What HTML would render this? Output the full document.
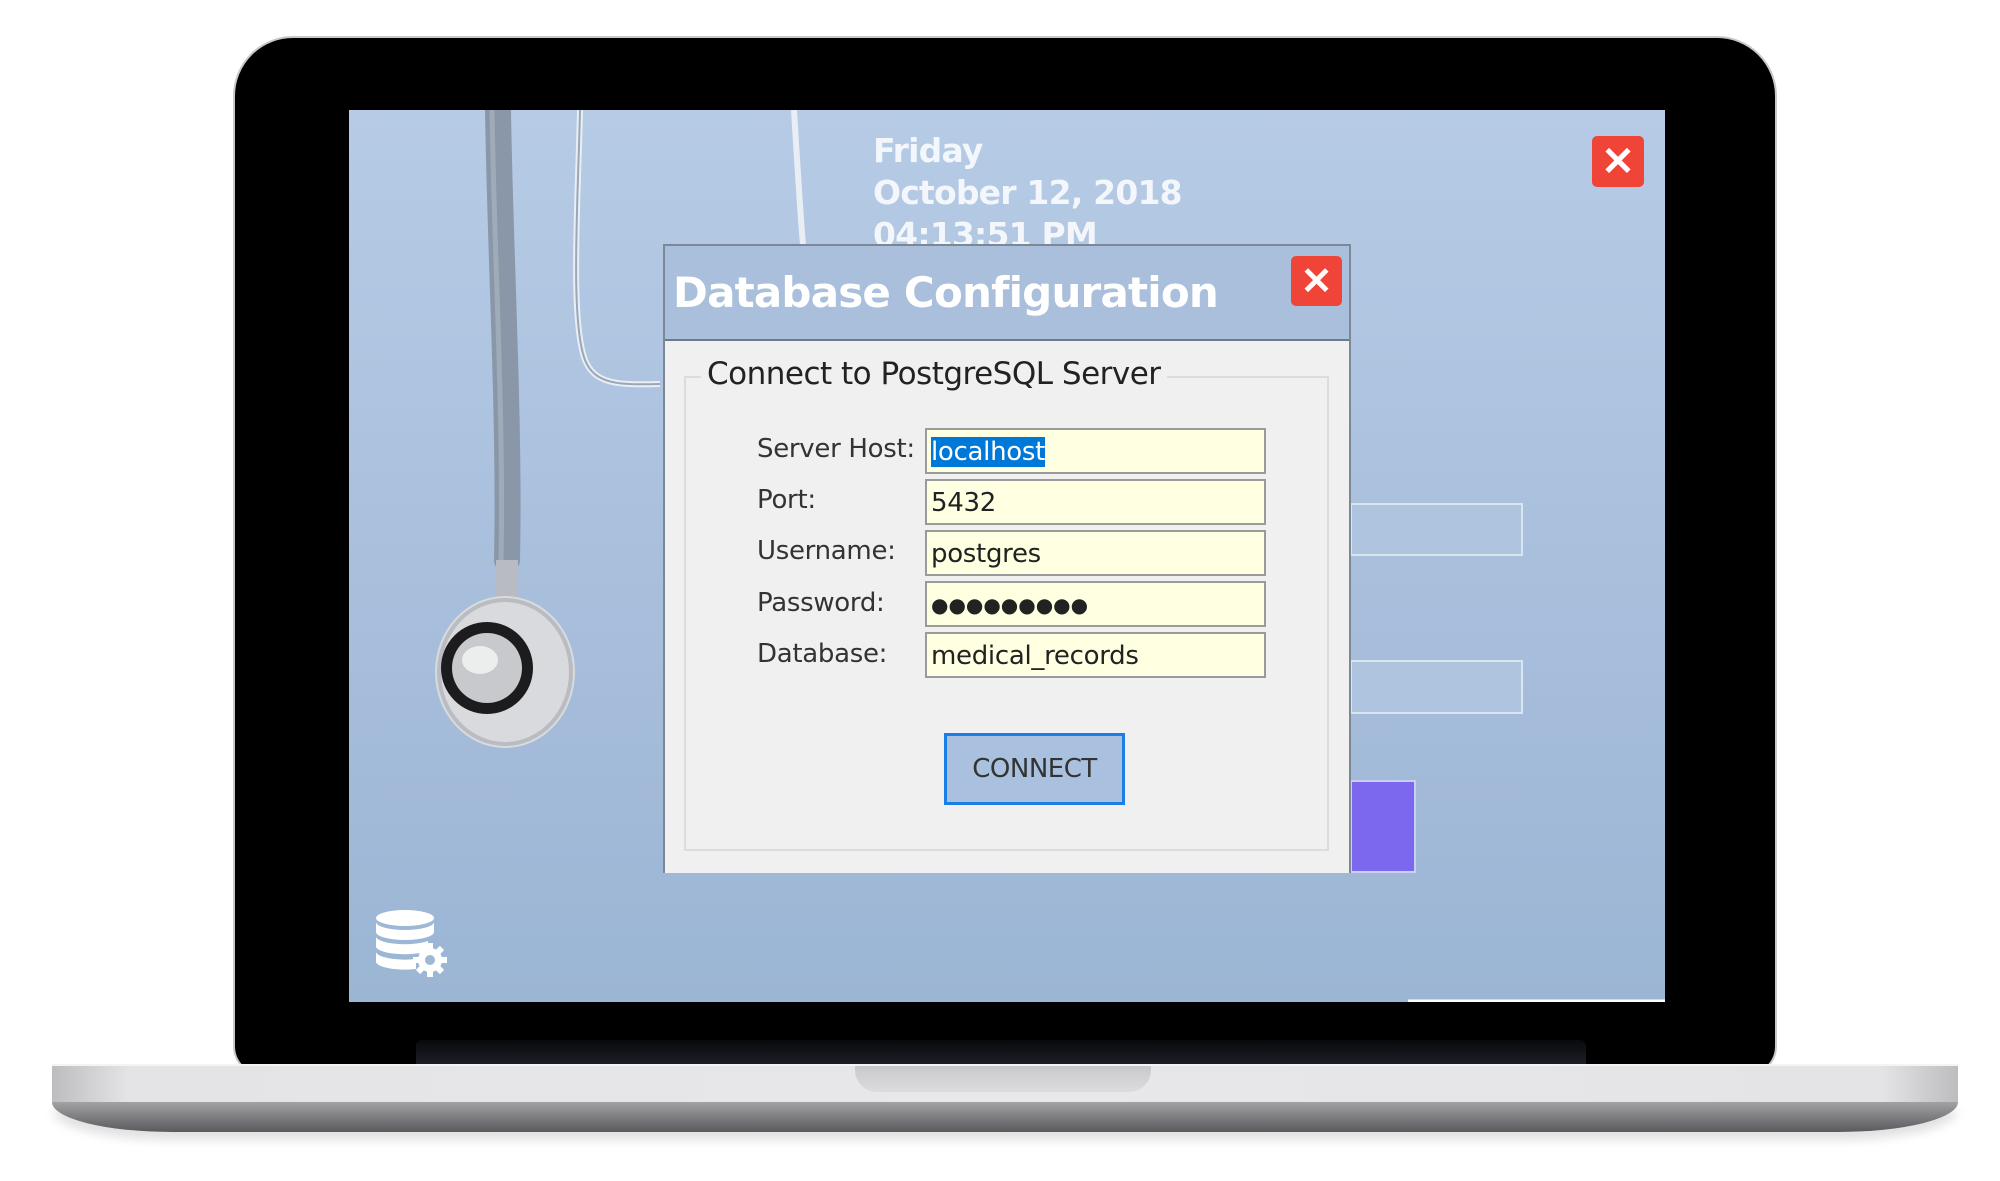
<!DOCTYPE html>
<html><head><meta charset="utf-8">
<style>
*{margin:0;padding:0;box-sizing:border-box}
body{width:2000px;height:1181px;background:#fff;position:relative;overflow:hidden;font-family:"Liberation Sans",sans-serif}
.abs{position:absolute}
#bezel{left:233px;top:36px;width:1544px;height:1040px;background:#000;border-radius:60px 60px 30px 30px;border:2px solid #c8c8c8}
#screen{left:349px;top:110px;width:1316px;height:892px;background:linear-gradient(180deg,#b6cbe5 0%,#a9c0dd 50%,#9bb5d4 100%);overflow:hidden}
#strip{left:416px;top:1040px;width:1170px;height:26px;background:linear-gradient(#0a0a0c,#1d2026);border-radius:6px 6px 0 0}
#base{left:52px;top:1064px;width:1906px;height:38px;background:linear-gradient(90deg,#bdbdbf 0%,#e4e4e6 4%,#e8e8ea 50%,#e4e4e6 96%,#bdbdbf 100%);border-top:2px solid #f4f4f4}
#base2{left:52px;top:1102px;width:1906px;height:30px;background:linear-gradient(#a2a2a5,#5a5a5e);border-radius:0 0 120px 120px/0 0 30px 30px;box-shadow:0 8px 10px rgba(0,0,0,.12)}
#notch{left:855px;top:1066px;width:296px;height:26px;background:linear-gradient(#c9c9cc,#dcdcde);border-radius:0 0 22px 22px}
.txt{color:#f3f6fb;font-size:33px;font-weight:bold;font-family:"DejaVu Sans","Liberation Sans",sans-serif;letter-spacing:-0.8px}
.x{background:#f04438;border-radius:5px;color:#fff;display:flex;align-items:center;justify-content:center}
#dlg{left:663px;top:244px;width:688px;height:629px;background:#f0f0f0;border:2px solid #7c8896;border-bottom:none}
#title{left:0;top:0;width:684px;height:95px;background:#a9bfdc;border-bottom:2px solid #6d7a8a}
#title span{position:absolute;left:8px;top:22px;font-size:42px;font-weight:bold;color:#fff;font-family:"DejaVu Sans",sans-serif;letter-spacing:-0.8px}
#grp{left:19px;top:130px;width:645px;height:475px;border:2px solid #dcdcdc}
#legend{left:36px;top:110px;background:#f0f0f0;padding:0 6px;font-size:31px;color:#222;font-family:"DejaVu Sans",sans-serif;letter-spacing:-0.5px}
.lbl{left:92px;font-size:26px;color:#333;font-family:"DejaVu Sans",sans-serif;letter-spacing:-0.3px}
.inp{left:260px;width:341px;height:46px;background:#ffffe1;border:2px solid #9a9a9a;font-size:26px;color:#222;font-family:"DejaVu Sans",sans-serif;padding:6px 4px;letter-spacing:-0.3px;line-height:32px}
#btn{left:279px;top:487px;width:181px;height:72px;background:#a9c0de;border:3px solid #1a7ee6;display:flex;align-items:center;justify-content:center;font-size:26px;color:#333;font-family:"DejaVu Sans",sans-serif;letter-spacing:-0.5px}
</style></head><body>
<div id="bezel" class="abs"></div>
<div id="strip" class="abs"></div>
<div id="base" class="abs"></div>
<div id="base2" class="abs"></div>
<div id="notch" class="abs"></div>
<div id="screen" class="abs">
<svg class="abs" style="left:0;top:0" width="1316" height="892" viewBox="349 110 1316 892">
 <path d="M580 110 C578 200 570 320 585 360 C595 385 620 385 660 384" fill="none" stroke="#e9eef5" stroke-width="6"/>
 <path d="M580 110 C578 200 570 320 585 360 C595 385 620 385 660 384" fill="none" stroke="#9aa7b6" stroke-width="2"/>
 <path d="M794 110 C797 160 800 210 803 245" fill="none" stroke="#e9eef5" stroke-width="6"/>
 <path d="M498 110 C500 250 510 420 507 560" fill="none" stroke="#8a97a8" stroke-width="26" stroke-linecap="round"/>
 <path d="M492 110 C494 250 504 420 501 560" fill="none" stroke="#a0abb9" stroke-width="5"/>
 <rect x="496" y="560" width="22" height="50" fill="#b8bcc2"/>
 <ellipse cx="505" cy="672" rx="70" ry="76" fill="#d9dadd"/>
 <ellipse cx="505" cy="672" rx="66" ry="72" fill="none" stroke="#b9bcc1" stroke-width="4"/>
 <ellipse cx="487" cy="668" rx="46" ry="46" fill="#1c1c1e"/>
 <ellipse cx="487" cy="668" rx="35" ry="35" fill="#c8c9cc"/>
 <ellipse cx="480" cy="660" rx="18" ry="14" fill="#eceded"/>
 <rect x="1351" y="504" width="171" height="51" fill="#afc4df" stroke="#dbe5f0" stroke-width="2"/>
 <rect x="1351" y="661" width="171" height="52" fill="#afc4df" stroke="#dbe5f0" stroke-width="2"/>
 <rect x="1351" y="781" width="64" height="91" fill="#7b68ee" stroke="#c8d2ee" stroke-width="2"/>
 <line x1="1408" y1="1001" x2="1665" y2="1001" stroke="#fff" stroke-width="3"/>
 <g fill="#fff">
  <ellipse cx="405" cy="918" rx="29" ry="8"/>
  <path d="M376 922 v10 a29 8 0 0 0 58 0 v-10 a29 8 0 0 1 -58 0z"/>
  <path d="M376 937 v10 a29 8 0 0 0 52 4 v-10 a29 8 0 0 1 -52 -4z"/>
  <path d="M376 952 v10 a29 8 0 0 0 40 7 v-10 a29 8 0 0 1 -40 -7z"/>
  <circle cx="430" cy="960" r="12"/>
  <g stroke="#fff" stroke-width="6"><line x1="430" y1="943" x2="430" y2="977"/><line x1="413" y1="960" x2="447" y2="960"/><line x1="418" y1="948" x2="442" y2="972"/><line x1="442" y1="948" x2="418" y2="972"/></g>
  <circle cx="430" cy="960" r="5" fill="#9fb8d6"/>
 </g>
</svg>
<div class="abs txt" style="left:524px;top:20px;line-height:42px">Friday<br>October 12, 2018<br>04:13:51 PM</div>
<div class="abs x" style="left:1243px;top:26px;width:52px;height:51px;font-size:40px;font-weight:bold">✕</div>
</div>
<div id="dlg" class="abs">
 <div id="title" class="abs"><span>Database Configuration</span>
  <div class="abs x" style="left:626px;top:10px;width:51px;height:50px;font-size:38px;font-weight:bold">✕</div></div>
 <div id="grp" class="abs"></div>
 <div id="legend" class="abs">Connect to PostgreSQL Server</div>
 <div class="abs lbl" style="top:188px">Server Host:</div>
 <div class="abs lbl" style="top:239px">Port:</div>
 <div class="abs lbl" style="top:290px">Username:</div>
 <div class="abs lbl" style="top:342px">Password:</div>
 <div class="abs lbl" style="top:393px">Database:</div>
 <div class="abs inp" style="top:182px"><span style="background:#0078d7;color:#fff">localhost</span></div>
 <div class="abs inp" style="top:233px">5432</div>
 <div class="abs inp" style="top:284px">postgres</div>
 <div class="abs inp" style="top:335px;font-size:20px;letter-spacing:0">●●●●●●●●●</div>
 <div class="abs inp" style="top:386px">medical_records</div>
 <div id="btn" class="abs">CONNECT</div>
</div>
</body></html>
